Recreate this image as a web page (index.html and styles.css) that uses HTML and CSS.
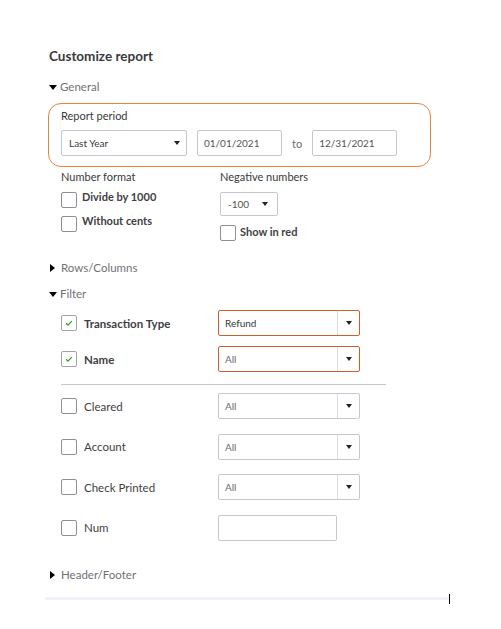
FILE: index.html
```html
<!DOCTYPE html>
<html>
<head>
<meta charset="utf-8">
<link rel="stylesheet" href="styles.css">
</head>
<body>
<div class="panel">
  <h1 class="title">Customize report</h1>

  <div class="sec-head"><span class="tri-down"></span>General</div>

  <div class="period-box">
    <div class="label">Report period</div>
    <div class="period-row">
      <div class="sel sel-period"><span>Last Year</span><span class="arrow"></span></div>
      <div class="inp inp-date">01/01/2021</div>
      <span class="to">to</span>
      <div class="inp inp-date">12/31/2021</div>
    </div>
  </div>

  <div class="format-row">
    <div class="col col-num">
      <div class="label">Number format</div>
      <label class="cb-line"><span class="cb"></span><span class="cb-text">Divide by 1000</span></label>
      <label class="cb-line cb-line2"><span class="cb"></span><span class="cb-text">Without cents</span></label>
    </div>
    <div class="col col-neg">
      <div class="label">Negative numbers</div>
      <div class="sel sel-neg"><span>-100</span><span class="arrow"></span></div>
      <label class="cb-line cb-red"><span class="cb"></span><span class="cb-text">Show in red</span></label>
    </div>
  </div>

  <div class="sec-head sec-rows"><span class="tri-right"></span>Rows/Columns</div>
  <div class="sec-head sec-filter"><span class="tri-down"></span>Filter</div>

  <div class="filters">
    <div class="frow frow-tt">
      <span class="cb checked"><svg viewBox="0 0 16 16" width="16" height="16"><path d="M4.6 8.3l2.2 2.2 4.4-4.6" fill="none" stroke="#2ca01c" stroke-width="1.3"/></svg></span>
      <span class="fname">Transaction Type</span>
      <div class="dd active"><span class="dd-val">Refund</span><span class="dd-btn"><span class="arrow"></span></span></div>
    </div>
    <div class="frow frow-name">
      <span class="cb checked"><svg viewBox="0 0 16 16" width="16" height="16"><path d="M4.6 8.3l2.2 2.2 4.4-4.6" fill="none" stroke="#2ca01c" stroke-width="1.3"/></svg></span>
      <span class="fname">Name</span>
      <div class="dd active"><span class="dd-val">All</span><span class="dd-btn"><span class="arrow"></span></span></div>
    </div>
    <div class="divider"></div>
    <div class="frow frow-plain">
      <span class="cb"></span>
      <span class="fname light">Cleared</span>
      <div class="dd"><span class="dd-val">All</span><span class="dd-btn"><span class="arrow"></span></span></div>
    </div>
    <div class="frow frow-plain">
      <span class="cb"></span>
      <span class="fname light">Account</span>
      <div class="dd"><span class="dd-val">All</span><span class="dd-btn"><span class="arrow"></span></span></div>
    </div>
    <div class="frow frow-plain">
      <span class="cb"></span>
      <span class="fname light">Check Printed</span>
      <div class="dd"><span class="dd-val">All</span><span class="dd-btn"><span class="arrow"></span></span></div>
    </div>
    <div class="frow frow-plain">
      <span class="cb"></span>
      <span class="fname light">Num</span>
      <div class="num-inp"></div>
    </div>
  </div>

  <div class="sec-head sec-hf"><span class="tri-right"></span>Header/Footer</div>

  <div class="footer-line"><span class="caret"></span></div>
</div>
</body>
</html>
```

FILE: styles.css
```css
* { box-sizing: border-box; }
html, body { margin: 0; padding: 0; background: #fff; }
body {
  font-family: "Lato", "Open Sans", sans-serif;
  color: #393a3d;
  width: 501px;
  height: 629px;
  overflow: hidden;
}
.panel {
  padding: 47px 0 0 49px;
}
.title {
  margin: 0;
  font-size: 13.5px;
  font-weight: 700;
  line-height: 18px;
  color: #393a3d;
}
.sec-head {
  display: flex;
  align-items: center;
  font-size: 11.5px;
  color: #707176;
  line-height: 14px;
  margin-top: 15px;
}
.tri-down {
  display: inline-block;
  width: 0; height: 0;
  border-left: 4.5px solid transparent;
  border-right: 4.5px solid transparent;
  border-top: 5px solid #000;
  margin-right: 3px;
}
.tri-right {
  display: inline-block;
  width: 0; height: 0;
  border-top: 4.5px solid transparent;
  border-bottom: 4.5px solid transparent;
  border-left: 5px solid #000;
  margin-left: 1px;
  margin-right: 6px;
}
.period-box {
  margin-top: 9px;
  margin-left: -1px;
  width: 383px;
  height: 64px;
  border: 1px solid #e8833a;
  border-radius: 13px;
  padding: 5px 0 0 12px;
}
.label {
  font-size: 11px;
  line-height: 14px;
  color: #393a3d;
}
.period-row {
  display: flex;
  align-items: center;
  margin-top: 7px;
}
.sel {
  display: flex;
  align-items: center;
  justify-content: space-between;
  border: 1px solid #c5c9cf;
  border-radius: 2px;
  font-size: 10px;
  color: #393a3d;
}
.sel-period {
  width: 126px;
  height: 26px;
  padding: 0 6px 0 7px;
}
.arrow {
  display: inline-block;
  width: 0; height: 0;
  border-left: 3.5px solid transparent;
  border-right: 3.5px solid transparent;
  border-top: 4px solid #222;
}
.inp {
  border: 1px solid #c5c9cf;
  border-radius: 2px;
  font-size: 10px;
  color: #555;
  display: flex;
  align-items: center;
}
.inp-date {
  width: 85px;
  height: 26px;
  padding-left: 6px;
}
.sel-period + .inp-date { margin-left: 10px; }
.to {
  font-size: 11px;
  color: #6b6c72;
  margin: 0 10px;
}
.format-row {
  display: flex;
  margin-top: 3px;
  padding-left: 12px;
}
.col-num { width: 159px; }
.cb-line {
  display: flex;
  align-items: center;
  margin-top: 8px;
}
.cb-line2 { margin-top: 8px; }
.cb {
  display: inline-flex;
  align-items: center;
  justify-content: center;
  width: 16px;
  height: 16px;
  border: 1px solid #8d9096;
  border-radius: 2px;
  background: #fff;
  flex: none;
}
.cb.checked { border-color: #a0a3a8; }
.cb.checked svg { display: block; }
.cb-text {
  font-size: 11px;
  font-weight: 700;
  color: #3f4044;
  margin-left: 5px;
  position: relative;
  top: -4px;
}
.sel-neg {
  width: 58px;
  height: 24px;
  margin-top: 8px;
  padding: 0 9px 0 7px;
  color: #555;
}
.cb-red { margin-top: 9px; }
.cb-red .cb-text { top: -2px; margin-left: 4px; }
.sec-rows { margin-top: 20px; }
.sec-filter { margin-top: 12px; }
.filters { padding-left: 12px; margin-top: 9px; }
.frow {
  display: flex;
  align-items: center;
  height: 26px;
}
.frow-name { margin-top: 10px; }
.fname {
  font-size: 11.5px;
  font-weight: 700;
  color: #3f4044;
  margin-left: 7px;
  width: 134px;
}
.fname.light { font-weight: 400; }
.dd {
  display: flex;
  width: 142px;
  height: 26px;
  border: 1px solid #c5c9cf;
  border-radius: 2px;
}
.dd.active { border-color: #c8622a; }
.dd-val {
  flex: 1;
  display: flex;
  align-items: center;
  padding-left: 6px;
  font-size: 10px;
  color: #6b6c72;
}
.frow-tt .dd-val { color: #393a3d; }
.dd-btn {
  width: 22px;
  border-left: 1.5px solid #dcdde2;
  display: flex;
  align-items: center;
  justify-content: center;
}
.divider {
  width: 325px;
  height: 1px;
  background: #c5c9cf;
  margin: 12px 0 8px;
}
.frow-plain + .frow-plain { margin-top: 14.5px; }
.num-inp {
  width: 119px;
  height: 26px;
  border: 1px solid #c5c9cf;
  border-radius: 2px;
}
.sec-hf { margin-top: 27px; }
.footer-line {
  position: relative;
  margin: 15px 0 0 -4px;
  width: 404px;
  height: 3px;
  background: #f1f2f7;
}
.caret {
  position: absolute;
  left: 404px;
  top: -3px;
  width: 1px;
  height: 10px;
  background: #000;
}
```
